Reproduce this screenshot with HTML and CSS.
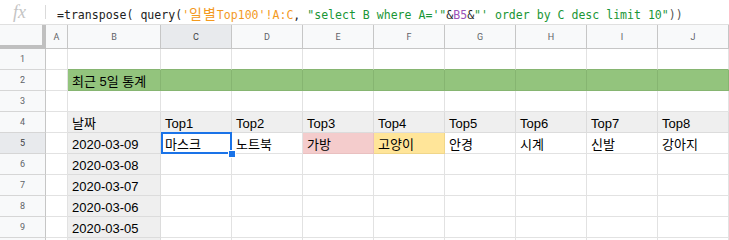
FILE: index.html
```html
<!DOCTYPE html>
<html lang="ko">
<head>
<meta charset="utf-8">
<link rel="stylesheet" href="styles.css">
</head>
<body>
<div class="fbar">
  <span class="fx">fx</span>
  <span class="sep"></span>
  <div class="formula"><span class="k">=transpose( query(</span><span class="o">'<span class="kr">일별</span>Top100'!A:C</span><span class="k">, </span><span class="s">"select B where A='"</span><span class="k">&amp;</span><span class="p">B5</span><span class="k">&amp;</span><span class="s">"' order by C desc limit 10"</span><span class="m">))</span></div>
</div>
<div class="sheet">
  <div class="corner"></div>
  <div class="ch">A</div><div class="ch">B</div><div class="ch sel">C</div><div class="ch">D</div><div class="ch">E</div><div class="ch">F</div><div class="ch">G</div><div class="ch">H</div><div class="ch">I</div><div class="ch">J</div>

  <div class="rh">1</div><div class="c"></div><div class="c ag"></div><div class="c ag"></div><div class="c ag"></div><div class="c ag"></div><div class="c ag"></div><div class="c ag"></div><div class="c ag"></div><div class="c ag"></div><div class="c ag"></div>

  <div class="rh">2</div><div class="c"></div><div class="c g">최근 5일 통계</div><div class="c g"></div><div class="c g"></div><div class="c g"></div><div class="c g"></div><div class="c g"></div><div class="c g"></div><div class="c g"></div><div class="c g"></div>

  <div class="rh">3</div><div class="c"></div><div class="c"></div><div class="c"></div><div class="c"></div><div class="c"></div><div class="c"></div><div class="c"></div><div class="c"></div><div class="c"></div><div class="c"></div>

  <div class="rh">4</div><div class="c"></div><div class="c gr">날짜</div><div class="c gr">Top1</div><div class="c gr">Top2</div><div class="c gr">Top3</div><div class="c gr">Top4</div><div class="c gr">Top5</div><div class="c gr">Top6</div><div class="c gr">Top7</div><div class="c gr">Top8</div>

  <div class="rh sel">5</div><div class="c"></div><div class="c gr">2020-03-09</div><div class="c active">마스크<span class="selbox"></span><span class="handle"></span></div><div class="c">노트북</div><div class="c pink">가방</div><div class="c yellow">고양이</div><div class="c">안경</div><div class="c">시계</div><div class="c">신발</div><div class="c">강아지</div>

  <div class="rh">6</div><div class="c"></div><div class="c gr">2020-03-08</div><div class="c"></div><div class="c"></div><div class="c"></div><div class="c"></div><div class="c"></div><div class="c"></div><div class="c"></div><div class="c"></div>

  <div class="rh">7</div><div class="c"></div><div class="c gr">2020-03-07</div><div class="c"></div><div class="c"></div><div class="c"></div><div class="c"></div><div class="c"></div><div class="c"></div><div class="c"></div><div class="c"></div>

  <div class="rh">8</div><div class="c"></div><div class="c gr">2020-03-06</div><div class="c"></div><div class="c"></div><div class="c"></div><div class="c"></div><div class="c"></div><div class="c"></div><div class="c"></div><div class="c"></div>

  <div class="rh">9</div><div class="c"></div><div class="c gr">2020-03-05</div><div class="c"></div><div class="c"></div><div class="c"></div><div class="c"></div><div class="c"></div><div class="c"></div><div class="c"></div><div class="c"></div>

  <div class="rh"></div><div class="c"></div><div class="c gr"></div><div class="c"></div><div class="c"></div><div class="c"></div><div class="c"></div><div class="c"></div><div class="c"></div><div class="c"></div><div class="c"></div>
</div>
</body>
</html>
```

FILE: styles.css
```css
* { box-sizing: border-box; }
html, body { margin: 0; padding: 0; background: #fff; overflow: hidden; }
body { width: 729px; height: 240px; }

.fbar {
  height: 25px;
  border-bottom: 1px solid #e0e0e0;
  display: flex;
  align-items: center;
  background: #fff;
}
.fx {
  margin-left: 13px;
  width: 32px;
  font-family: "Liberation Serif", serif;
  font-style: italic;
  font-size: 18px;
  color: #c4c4c4;
  line-height: 24px;
}
.sep {
  width: 1px;
  height: 14px;
  background: #dadada;
}
.formula {
  margin-left: 11px;
  padding-top: 1px;
  font-family: "DejaVu Sans Mono", monospace;
  font-size: 11.55px;
  white-space: pre;
  color: #222;
}
.formula .kr {
  font-family: "Noto Sans CJK KR", sans-serif;
  font-size: 14px;
  letter-spacing: 1px;
}
.formula .o { color: #f39a1e; }
.formula .s { color: #1a9636; }
.formula .p { color: #9a52b8; }
.formula .m { color: #555; }

.sheet {
  display: grid;
  grid-template-columns: 46px 22px 93px repeat(8, 71px);
  grid-template-rows: 24px;
  grid-auto-rows: 21px;
  font-family: "Liberation Sans", "Noto Sans CJK KR", sans-serif;
  font-size: 13px;
  color: #000;
}
.corner {
  background: #f8f9fa;
  border-right: 4px solid #c0c0c0;
  border-bottom: 4px solid #c0c0c0;
}
.ch, .rh {
  background: #f8f9fa;
  border-right: 1px solid #c6c6c6;
  font-family: Roboto, "Liberation Sans", sans-serif;
  font-size: 9px;
  color: #5f6368;
  display: flex;
  align-items: center;
  justify-content: center;
}
.ch { border-bottom: 1px solid #c6c6c6; }
.rh { border-bottom: 1px solid #d6d6d6; }
.ch.sel, .rh.sel { background: #e8eaed; color: #3c4043; }

.c {
  position: relative;
  border-right: 1px solid #e2e2e2;
  border-bottom: 1px solid #e2e2e2;
  padding: 4px 0 0 4px;
  line-height: 16px;
  white-space: nowrap;
}
.c.ag { border-bottom-color: #86b571; }
.c.g { background: #93c47d; border-right-color: #86b571; border-bottom-color: #86b571; }
.c.gr { background: #efefef; border-right-color: #dcdcdc; border-bottom-color: #dcdcdc; }
.c.pink { background: #f4cccc; border-right-color: #e9c0c0; border-bottom-color: #e9c0c0; }
.c.yellow { background: #ffe599; border-right-color: #f0d68a; border-bottom-color: #f0d68a; }

.c.active { z-index: 2; }
.selbox {
  position: absolute;
  left: 0;
  top: -1px;
  width: 71px;
  height: 22px;
  border: 2px solid #1a73e8;
}
.handle {
  position: absolute;
  left: 67px;
  top: 17px;
  width: 8px;
  height: 8px;
  background: #1a73e8;
  border: 1px solid #fff;
}
```
